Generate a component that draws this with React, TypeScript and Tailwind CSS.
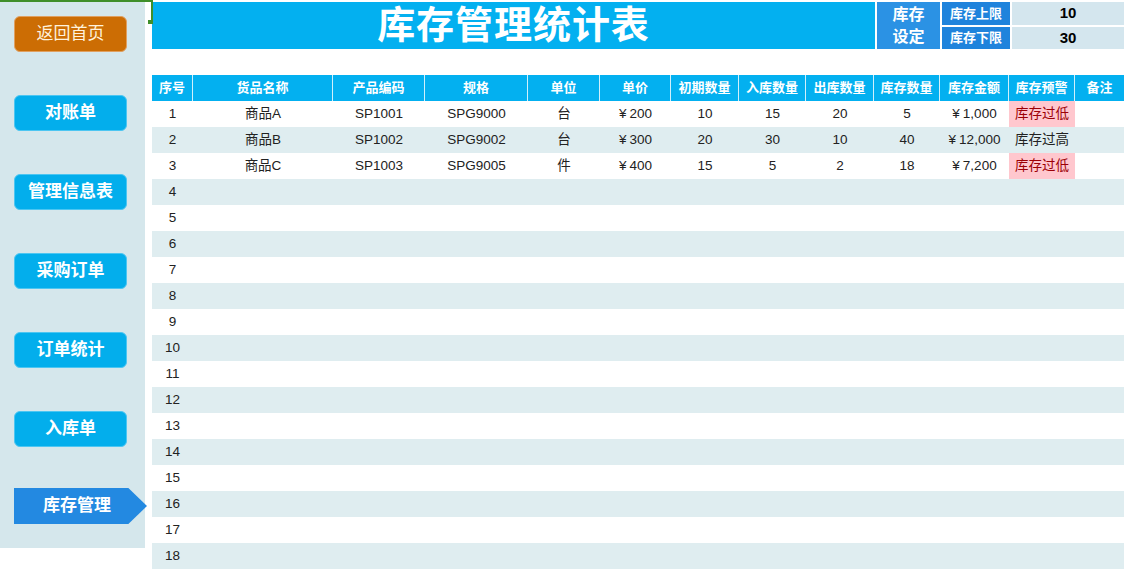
import React from 'react';

const font = { fontFamily: '"Liberation Sans", "Noto Sans CJK SC", sans-serif' };

const columns = [
  { name: '序号', w: 'w-[41px]' },
  { name: '货品名称', w: 'w-[140px]' },
  { name: '产品编码', w: 'w-[92px]' },
  { name: '规格', w: 'w-[103px]' },
  { name: '单位', w: 'w-[72px]' },
  { name: '单价', w: 'w-[71px]' },
  { name: '初期数量', w: 'w-[68px]' },
  { name: '入库数量', w: 'w-[67px]' },
  { name: '出库数量', w: 'w-[68px]' },
  { name: '库存数量', w: 'w-[66px]' },
  { name: '库存金额', w: 'w-[69px]' },
  { name: '库存预警', w: 'w-[66px]' },
  { name: '备注', w: 'w-[49px]' },
];

const items = [
  ['商品A', 'SP1001', 'SPG9000', '台', '¥200', '10', '15', '20', '5', '¥1,000', '库存过低'],
  ['商品B', 'SP1002', 'SPG9002', '台', '¥300', '20', '30', '10', '40', '¥12,000', '库存过高'],
  ['商品C', 'SP1003', 'SPG9005', '件', '¥400', '15', '5', '2', '18', '¥7,200', '库存过低'],
];

const navButtons = ['对账单', '管理信息表', '采购订单', '订单统计', '入库单'];

function Cell({ value }: { value: string }) {
  if (value.startsWith('¥')) {
    return (
      <span>
        <span className="mr-[3px]">¥</span>
        {value.slice(1)}
      </span>
    );
  }
  return <span>{value}</span>;
}

export default function App() {
  const rows = Array.from({ length: 18 }, (_, i) => i + 1);

  return (
    <div className="relative flex w-[1126px] h-[585px] bg-white overflow-hidden" style={font}>
      {/* Excel selection marker */}
      <div className="absolute left-0 top-0 w-[152px] h-[2px] bg-[#3f8f2a]"></div>
      <div className="absolute left-[151px] top-0 w-[2px] h-[22px] bg-[#3f8f2a]"></div>
      <div className="absolute left-[148px] top-[20px] w-[5px] h-[4px] bg-[#3f8f2a]"></div>

      {/* Sidebar */}
      <div className="w-[145px] h-[548px] bg-[#d5e7ec] flex flex-col pt-[16px] pl-[14px] gap-[43px]">
        <div className="w-[113px] h-[36px] rounded-md bg-[#cc6d04] border border-[#e0a060] flex items-center justify-center text-[17px] text-[#fff2dc]">
          返回首页
        </div>
        {navButtons.map((b) => (
          <div
            key={b}
            className="w-[113px] h-[36px] rounded-md bg-[#03aeec] border border-[#4cc6f2] flex items-center justify-center text-[17px] font-bold text-white"
          >
            {b}
          </div>
        ))}
        <div className="w-[133px] h-[36px] -mt-[2px] bg-[#2389e1] [clip-path:polygon(0_0,86%_0,100%_50%,86%_100%,0_100%)] flex items-center pl-[29px] text-[17px] font-bold text-white">
          库存管理
        </div>
      </div>

      {/* Main */}
      <div className="ml-[7px] w-[972px] flex flex-col">
        <div className="mt-[2px] h-[47px] flex gap-[2px]">
          <div className="w-[723px] bg-[#03b0f0] flex items-center justify-center text-[38px] font-bold text-white tracking-wide">
            库存管理统计表
          </div>
          <div className="w-[63px] bg-[#2b92e4] flex flex-col items-center justify-center text-[16px] font-bold text-white leading-[22px]">
            <span>库存</span>
            <span>设定</span>
          </div>
          <div className="flex-1 flex flex-col gap-[2px]">
            <div className="flex-1 flex gap-[2px]">
              <div className="w-[68px] bg-[#1f83dc] flex items-center justify-center text-[13px] font-bold text-white">库存上限</div>
              <div className="flex-1 bg-[#d4e6ee] flex items-center justify-center text-[15px] font-bold text-black">10</div>
            </div>
            <div className="flex-1 flex gap-[2px]">
              <div className="w-[68px] bg-[#1f83dc] flex items-center justify-center text-[13px] font-bold text-white">库存下限</div>
              <div className="flex-1 bg-[#d4e6ee] flex items-center justify-center text-[15px] font-bold text-black">30</div>
            </div>
          </div>
        </div>

        {/* Table */}
        <div className="mt-[26px] flex flex-col">
          <div className="flex h-[26px] bg-[#03b0f0]">
            {columns.map((c, i) => (
              <div
                key={c.name}
                className={`${c.w} flex items-center justify-center text-[13px] font-bold text-white ${
                  i < columns.length - 1 ? 'border-r border-[#d0f0fc]' : ''
                }`}
              >
                {c.name}
              </div>
            ))}
          </div>
          {rows.map((n) => {
            const item = items[n - 1];
            return (
              <div key={n} className={`flex h-[26px] ${n % 2 === 0 ? 'bg-[#dfedf0]' : 'bg-white'}`}>
                <div className="w-[41px] flex items-center justify-center text-[13.5px] text-[#222]">{n}</div>
                {columns.slice(1).map((c, j) => {
                  const value = item ? item[j] ?? '' : '';
                  const warn = value === '库存过低';
                  return (
                    <div
                      key={c.name}
                      className={`${c.w} flex items-center justify-center text-[13.5px] ${
                        warn ? 'bg-[#ffc7ce] text-[#9c0006]' : 'text-[#222]'
                      }`}
                    >
                      <Cell value={value} />
                    </div>
                  );
                })}
              </div>
            );
          })}
        </div>
      </div>
    </div>
  );
}
